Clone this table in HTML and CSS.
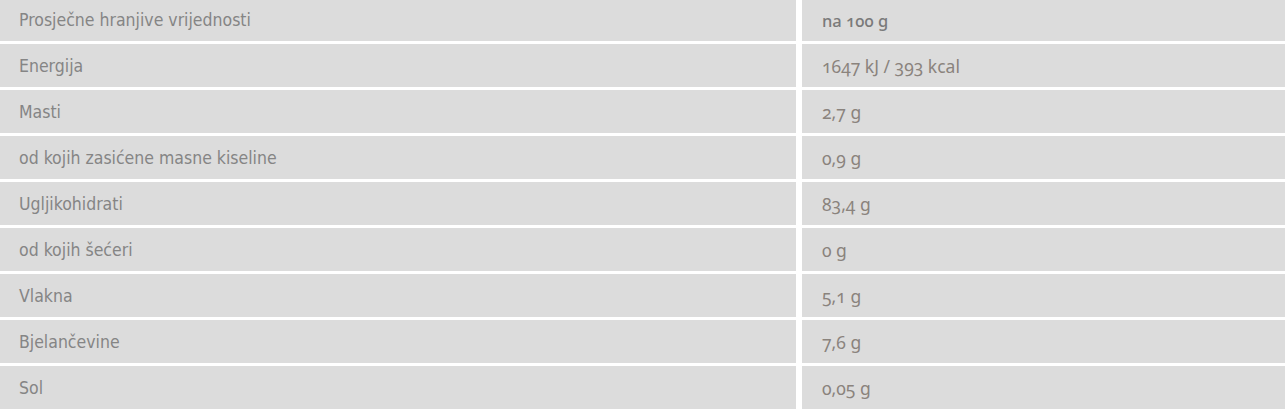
FILE: index.html
```html
<!DOCTYPE html>
<html lang="hr">
<head>
<meta charset="utf-8">
<link rel="stylesheet" href="styles.css">
</head>
<body>
<div class="nutri">
  <div class="cell label">Prosječne hranjive vrijednosti</div><div class="cell value head">na 100 g</div>
  <div class="cell label">Energija</div><div class="cell value">1647 kJ / 393 kcal</div>
  <div class="cell label">Masti</div><div class="cell value">2,7 g</div>
  <div class="cell label">od kojih zasićene masne kiseline</div><div class="cell value">0,9 g</div>
  <div class="cell label">Ugljikohidrati</div><div class="cell value">83,4 g</div>
  <div class="cell label">od kojih šećeri</div><div class="cell value">0 g</div>
  <div class="cell label">Vlakna</div><div class="cell value">5,1 g</div>
  <div class="cell label">Bjelančevine</div><div class="cell value">7,6 g</div>
  <div class="cell label">Sol</div><div class="cell value">0,05 g</div>
</div>
</body>
</html>
```
FILE: styles.css
```css
html, body {
  margin: 0;
  padding: 0;
  background: #ffffff;
}
.nutri {
  width: 1285px;
  margin-top: -2px;
  display: grid;
  grid-template-columns: 796px 1fr;
  column-gap: 6px;
  row-gap: 3px;
}
.cell {
  background: #dcdcdc;
  height: 43px;
  box-sizing: border-box;
  display: flex;
  align-items: center;
  padding-top: 1px;
  white-space: nowrap;
}
.label {
  padding-left: 19px;
  font-family: "DejaVu Sans Condensed", "DejaVu Sans", sans-serif;
  font-size: 17.5px;
  color: #858585;
}
.value {
  padding-left: 20px;
  font-family: "Noto Sans", sans-serif;
  font-variant-numeric: oldstyle-nums;
  color: #8a837d;
  font-size: 17.5px;
}
.value.head {
  color: #7a7a7a;
  font-weight: 500;
  font-size: 16.5px;
}
```
